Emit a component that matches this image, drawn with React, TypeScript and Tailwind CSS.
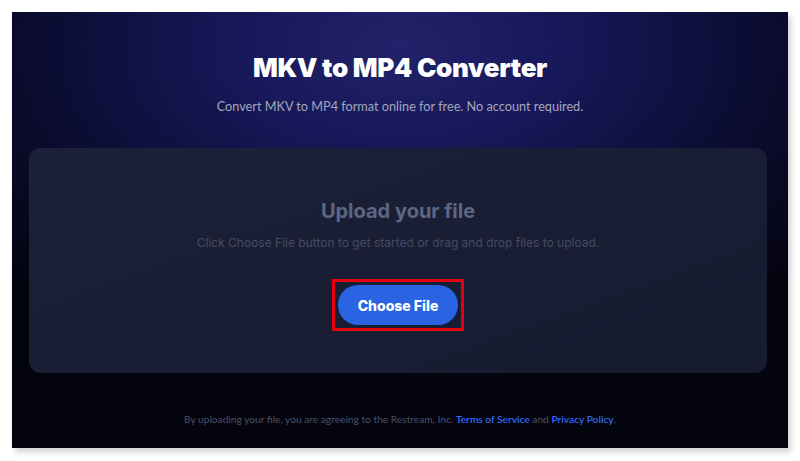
import React from "react";

export default function App() {
  return (
    <div className="w-[800px] h-[461px] bg-white relative overflow-hidden" style={{ fontFamily: "Inter, 'Noto Sans', sans-serif" }}>
      <div className="absolute left-[12px] top-[12px] w-[776px] h-[436px] shadow-[3px_4px_6px_rgba(0,0,0,0.18)] bg-[radial-gradient(ellipse_70%_75%_at_50%_8%,#22226a_0%,#17185a_30%,#0c0d33_65%,#04040f_100%)] flex flex-col items-center">
        <h1 className="mt-[40px] text-[26px] leading-[32px] font-black text-white tracking-[-0.3px]">MKV to MP4 Converter</h1>
        <p className="mt-[14px] text-[12.7px] leading-[16px] text-[#a3a7bd]" style={{ fontFamily: "Lato, Inter, sans-serif" }}>Convert MKV to MP4 format online for free. No account required.</p>
        <div className="mt-[34px] self-start ml-[17px] w-[738px] h-[225px] rounded-[12px] bg-[linear-gradient(160deg,#1c2139_0%,#171b30_100%)] flex flex-col items-center">
          <h2 className="mt-[50px] text-[20px] leading-[26px] font-bold text-[#5d6683]">Upload your file</h2>
          <p className="mt-[11px] text-[12px] leading-[16px] text-[#444b63]">Click Choose File button to get started or drag and drop files to upload.</p>
          <div className="mt-[28px] border-[3px] border-[#e3000f] p-[3px]">
            <button className="w-[120px] h-[40px] rounded-full bg-[#2a64e2] text-white text-[14px] font-extrabold">Choose File</button>
          </div>
        </div>
        <p className="mt-[39px] text-[10.2px] leading-[14px] text-[#4b5168]" style={{ fontFamily: "Lato, Inter, sans-serif" }}>
          By uploading your file, you are agreeing to the Restream, Inc. <span className="text-[#2f6bf5] font-semibold">Terms of Service</span> and <span className="text-[#2f6bf5] font-semibold">Privacy Policy</span>.
        </p>
      </div>
    </div>
  );
}
